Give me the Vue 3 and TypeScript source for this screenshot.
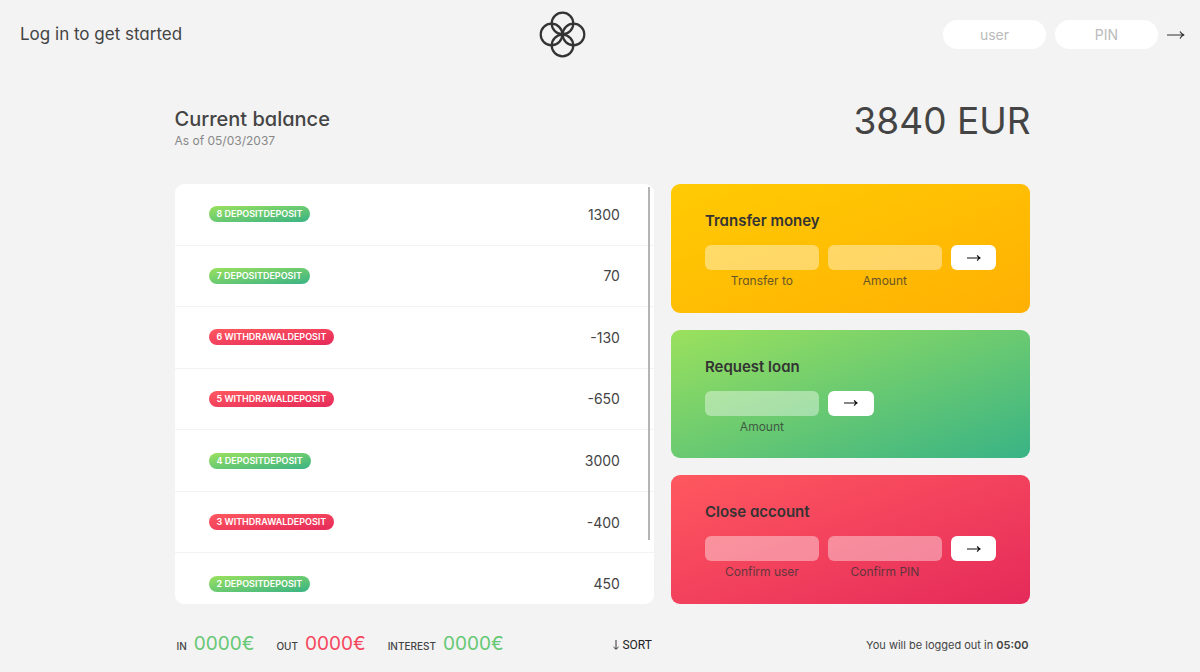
<script setup lang="ts">
import { ref } from 'vue'

interface Movement {
  id: number
  type: 'deposit' | 'withdrawal'
  value: number
}

interface Field {
  id: string
  label: string
  type: string
}

interface Operation {
  kind: string
  title: string
  fields: Field[]
}

const movements: Movement[] = [
  { id: 8, type: 'deposit', value: 1300 },
  { id: 7, type: 'deposit', value: 70 },
  { id: 6, type: 'withdrawal', value: -130 },
  { id: 5, type: 'withdrawal', value: -650 },
  { id: 4, type: 'deposit', value: 3000 },
  { id: 3, type: 'withdrawal', value: -400 },
  { id: 2, type: 'deposit', value: 450 },
]

const operations: Operation[] = [
  {
    kind: 'transfer',
    title: 'Transfer money',
    fields: [
      { id: 'transfer-to', label: 'Transfer to', type: 'text' },
      { id: 'transfer-amount', label: 'Amount', type: 'text' },
    ],
  },
  {
    kind: 'loan',
    title: 'Request loan',
    fields: [{ id: 'loan-amount', label: 'Amount', type: 'text' }],
  },
  {
    kind: 'close',
    title: 'Close account',
    fields: [
      { id: 'close-user', label: 'Confirm user', type: 'text' },
      { id: 'close-pin', label: 'Confirm PIN', type: 'password' },
    ],
  },
]

const summary = [
  { label: 'In', value: '0000€', tone: 'in' },
  { label: 'Out', value: '0000€', tone: 'out' },
  { label: 'Interest', value: '0000€', tone: 'in' },
]

const user = ref('')
const pin = ref('')
</script>

<template>
  <div class="page">
    <nav class="nav">
      <p class="welcome">Log in to get started</p>
      <svg class="logo" viewBox="0 0 47 47" aria-hidden="true">
        <g fill="none" stroke="#333" stroke-width="2.2">
          <circle cx="23.5" cy="12.5" r="10.8" />
          <circle cx="12.5" cy="23.5" r="10.8" />
          <circle cx="34.5" cy="23.5" r="10.8" />
          <circle cx="23.5" cy="34.5" r="10.8" />
        </g>
      </svg>
      <form class="login" @submit.prevent>
        <input v-model="user" class="login-input" type="text" placeholder="user" aria-label="user" />
        <input v-model="pin" class="login-input" type="text" placeholder="PIN" aria-label="PIN" />
        <button class="login-btn" aria-label="Log in">
          <svg class="arrow-large" viewBox="0 0 18 10" aria-hidden="true">
            <path d="M0 5H17M13 1.5C14 3.5 15.5 4.6 17.2 5C15.5 5.4 14 6.5 13 8.5" fill="none" stroke="#333" stroke-width="1.2" />
          </svg>
        </button>
      </form>
    </nav>

    <main class="app">
      <header class="balance">
        <div>
          <h1 class="balance-label">Current balance</h1>
          <p class="balance-date">As of 05/03/2037</p>
        </div>
        <p class="balance-value">3840 EUR</p>
      </header>

      <section class="movements">
        <ul class="movement-list">
          <li v-for="m in movements" :key="m.id" class="movement">
            <span class="badge" :class="m.type">{{ m.id }} {{ m.type }}deposit</span>
            <span class="movement-value">{{ m.value }}</span>
          </li>
        </ul>
      </section>

      <div class="operations">
        <section v-for="op in operations" :key="op.kind" class="operation" :class="op.kind">
          <h2 class="operation-title">{{ op.title }}</h2>
          <form class="form" @submit.prevent>
            <div v-for="f in op.fields" :key="f.id" class="field">
              <input :id="f.id" class="field-input" :type="f.type" />
              <label class="field-label" :for="f.id">{{ f.label }}</label>
            </div>
            <button class="form-btn" :aria-label="op.title">
              <svg class="arrow-small" viewBox="0 0 14 8" aria-hidden="true">
                <path d="M0 4H13M10.2 1.4C11 2.8 12 3.7 13.4 4C12 4.3 11 5.2 10.2 6.6" fill="none" stroke="#111" stroke-width="1.2" />
              </svg>
            </button>
          </form>
        </section>
      </div>

      <footer class="summary">
        <p v-for="s in summary" :key="s.label" class="summary-item">
          <span class="summary-label">{{ s.label }}</span>
          <span class="summary-value" :class="s.tone">{{ s.value }}</span>
        </p>
        <button class="sort">
          <svg class="sort-icon" viewBox="0 0 6 10" aria-hidden="true">
            <path d="M3 0V9M0.5 7L3 9.3L5.5 7" fill="none" stroke="#333" stroke-width="1" />
          </svg>
          SORT
        </button>
      </footer>
      <p class="timer">You will be logged out in <strong>05:00</strong></p>
    </main>
  </div>
</template>

<style>
body {
  margin: 0;
  background: #f3f3f3;
}
</style>

<style scoped>
.page {
  font-family: Inter, "Open Sans", sans-serif;
  font-feature-settings: "cv11";
  color: #444;
  line-height: 1.5;
}

h1,
h2,
p,
ul {
  margin: 0;
  padding: 0;
}

button,
input {
  border: 0;
  padding: 0;
  min-width: 0;
  font-family: inherit;
  font-feature-settings: inherit;
}

button {
  cursor: pointer;
}

.nav {
  display: flex;
  justify-content: space-between;
  align-items: center;
  height: 69px;
  padding: 0 15px 0 20px;
}

.welcome {
  font-size: 17px;
  font-weight: 400;
}

.logo {
  width: 47px;
  height: 47px;
}

.login {
  display: flex;
  align-items: center;
  gap: 9px;
}

.login-input {
  width: 103px;
  height: 29px;
  border-radius: 15px;
  background: #fff;
  color: #333;
  font-size: 14px;
  text-align: center;
}

.login-input::placeholder {
  color: #bbb;
  opacity: 1;
}

.login-btn {
  display: flex;
  background: none;
}

.arrow-large {
  width: 18px;
  height: 10px;
}

.app {
  display: grid;
  grid-template-columns: 4fr 3fr;
  column-gap: 17px;
  box-sizing: border-box;
  max-width: 861px;
  margin: 0 auto;
  padding: 31px 0 8px 5px;
}

.balance {
  grid-column: 1 / -1;
  display: flex;
  justify-content: space-between;
  height: 56px;
  margin-bottom: 28px;
}

.balance-label {
  padding-top: 6px;
  font-size: 20px;
  font-weight: 500;
  line-height: 26px;
}

.balance-date {
  font-size: 12px;
  line-height: 18px;
  color: #888;
}

.balance-value {
  font-size: 37px;
  font-weight: 400;
  line-height: 42px;
}

.movements {
  position: relative;
  height: 420px;
  border-radius: 9px;
  background: #fff;
  overflow: hidden;
}

.movements::after {
  content: "";
  position: absolute;
  top: 3px;
  right: 4px;
  width: 2px;
  height: 353px;
  background: #b4b4b4;
}

.movement-list {
  display: grid;
  grid-template-rows: repeat(7, 1fr);
  height: 431px;
  list-style: none;
}

.movement {
  display: flex;
  justify-content: space-between;
  align-items: center;
  padding: 0 34px;
  border-bottom: 1px solid #f3f3f3;
}

.badge {
  padding: 0 8px;
  border-radius: 8px;
  color: #fff;
  font-size: 9px;
  font-weight: 600;
  line-height: 16px;
  text-transform: uppercase;
}

.deposit {
  background: linear-gradient(to top left, #39b385, #9be15d);
}

.withdrawal {
  background: linear-gradient(to top left, #e52a5a, #ff585f);
}

.movement-value {
  font-size: 14px;
}

.operations {
  display: grid;
  grid-template-rows: repeat(3, 1fr);
  gap: 17px;
}

.operation {
  padding: 25px 34px 0;
  border-radius: 9px;
  color: #333;
}

.transfer {
  background: linear-gradient(to top left, #ffb003, #ffcb03);
}

.loan {
  background: linear-gradient(to top left, #39b385, #9be15d);
}

.close {
  background: linear-gradient(to top left, #e52a5a, #ff585f);
}

.operation-title {
  margin-bottom: 12px;
  font-size: 15px;
  font-weight: 600;
  line-height: 24px;
}

.form {
  display: grid;
  grid-template-columns: 5fr 5fr 2fr;
  column-gap: 9px;
  align-items: start;
}

.loan .form {
  grid-template-columns: 5fr 2fr 5fr;
}

.field {
  display: flex;
  flex-direction: column;
  align-items: stretch;
  min-width: 0;
}

.field-input {
  height: 25px;
  border-radius: 6px;
  background: rgba(255, 255, 255, 0.4);
  color: #333;
  font-size: 14px;
  text-align: center;
}

.field-label {
  font-size: 12px;
  line-height: 22px;
  text-align: center;
  opacity: 0.75;
}

.form-btn {
  display: flex;
  align-items: center;
  justify-content: center;
  height: 25px;
  border-radius: 6px;
  background: #fff;
}

.arrow-small {
  width: 14px;
  height: 8px;
}

.summary {
  display: flex;
  align-items: baseline;
  gap: 22px;
  padding: 26px 2px 0;
}

.summary-item {
  display: flex;
  align-items: baseline;
  gap: 7px;
  line-height: 28px;
}

.summary-label {
  font-size: 10px;
  font-weight: 500;
  text-transform: uppercase;
}

.summary-value {
  font-size: 19px;
}

.in {
  color: #66c873;
}

.out {
  color: #f5465d;
}

.sort {
  display: flex;
  align-items: center;
  gap: 3px;
  margin-left: auto;
  background: none;
  color: #222;
  font-family: Roboto, sans-serif;
  font-size: 12px;
}

.sort-icon {
  width: 6px;
  height: 10px;
}

.timer {
  padding: 32px 2px 0;
  font-size: 11px;
  line-height: 18px;
  text-align: right;
}

.timer strong {
  font-weight: 600;
}
</style>
